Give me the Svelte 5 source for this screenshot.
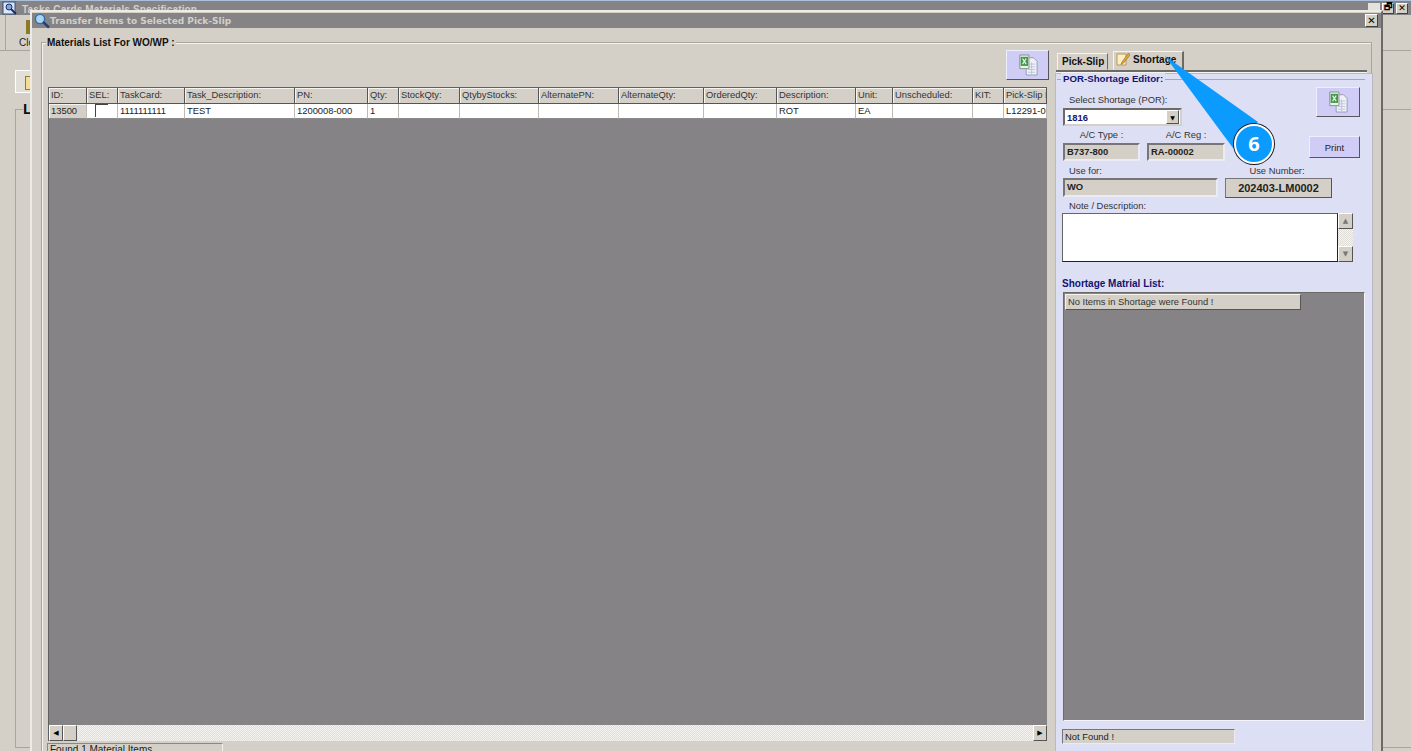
<script>
    const columns = [
        { name: "ID:", width: 38, value: "13500", grey: true },
        { name: "SEL:", width: 31, check: true },
        { name: "TaskCard:", width: 67, value: "1111111111" },
        { name: "Task_Description:", width: 110, value: "TEST" },
        { name: "PN:", width: 73, value: "1200008-000" },
        { name: "Qty:", width: 31, value: "1" },
        { name: "StockQty:", width: 61 },
        { name: "QtybyStocks:", width: 79 },
        { name: "AlternatePN:", width: 80 },
        { name: "AlternateQty:", width: 85 },
        { name: "OrderedQty:", width: 73 },
        { name: "Description:", width: 79, value: "ROT" },
        { name: "Unit:", width: 37, value: "EA" },
        { name: "Unscheduled:", width: 80 },
        { name: "KIT:", width: 31 },
        { name: "Pick-Slip No:", width: 43, value: "L12291-0" }
    ];
    const gridColumns = columns.map((c) => `${c.width}px`).join(" ");
</script>

{#snippet excel()}
    <svg class="excel" viewBox="0 0 22 24" width="20" height="22">
        <path d="M9 4h8l4 4v15H9z" fill="#eef1f8" stroke="#8f98b0" />
        <path d="M11 11h8M11 14h8M11 17h8M11 20h8M15 9v13" stroke="#b9c3dc" />
        <path d="M2 1h10v15H2z" fill="#eef3ea" stroke="#7f8a86" />
        <rect x="3" y="3" width="8" height="10" fill="#3f9a4c" />
        <path d="M5 5l4 6M9 5l-4 6" stroke="#e8f4e8" stroke-width="1.3" />
    </svg>
{/snippet}

<div class="desktop">
    <div class="back-window">
        <div class="back-title">
            <svg class="app-icon" viewBox="0 0 16 14" width="16" height="14">
                <rect x="1" y="1" width="12" height="12" fill="#dfe6f5" stroke="#33507f" />
                <circle cx="7" cy="6" r="3" fill="#7fa6e0" stroke="#1c3564" />
                <path d="M9 8l5 5" stroke="#1c2f5c" stroke-width="2" />
            </svg>
            <span>Tasks Cards Materials Specification</span>
            <div class="back-controls">
                <span class="ctl blank"></span>
                <span class="ctl">🗗</span>
                <span class="ctl">✕</span>
            </div>
        </div>
        <div class="back-toolbar">
            <div class="tool">
                <span class="door"></span>
                <span>Close</span>
            </div>
        </div>
        <div class="back-body">
            <div class="back-tab"><span class="note-mini"></span></div>
            <div class="back-group"><span class="back-legend">List</span></div>
        </div>
    </div>

    <div class="window">
        <div class="title">
            <svg viewBox="0 0 18 16" width="18" height="16">
                <circle cx="7" cy="6" r="4.6" fill="#a9d4f5" stroke="#2f6ea8" stroke-width="1.4" />
                <path d="M10 9l6 5.5" stroke="#27426f" stroke-width="2.4" />
            </svg>
            <span class="title-text">Transfer Items to Selected Pick-Slip</span>
            <span class="ctl close">✕</span>
        </div>

        <div class="group">
            <div class="group-legend">Materials List For WO/WP :</div>
            <div class="columns">
                <div class="left">
                    <div class="left-tools">
                        <button class="btn export">{@render excel()}</button>
                    </div>
                    <div class="table">
                        <div class="head" style="grid-template-columns: {gridColumns}">
                            {#each columns as c}
                                <div class="hcell">{c.name}</div>
                            {/each}
                        </div>
                        <div class="row" style="grid-template-columns: {gridColumns}">
                            {#each columns as c}
                                <div class="cell" class:grey={c.grey}>
                                    {#if c.check}<span class="check"></span>{:else}{c.value ?? ""}{/if}
                                </div>
                            {/each}
                        </div>
                        <div class="table-empty"></div>
                        <div class="hscroll">
                            <span class="sbtn">◀</span>
                            <span class="sbtn thumb"></span>
                            <span class="track"></span>
                            <span class="sbtn">▶</span>
                        </div>
                    </div>
                    <div class="found">Found 1 Material Items</div>
                </div>

                <div class="right">
                    <div class="tabs">
                        <div class="tab">Pick-Slip</div>
                        <div class="tab active">
                            <svg viewBox="0 0 14 14" width="14" height="14">
                                <path d="M1 2h9v11H1z" fill="#fbeec4" stroke="#b59a58" />
                                <path d="M12.5 1L6 10l-1 2.5L7.5 11 14 3z" fill="#e8a83c" stroke="#8a6420" stroke-width=".6" />
                            </svg>
                            Shortage
                        </div>
                    </div>
                    <div class="panel">
                        <div class="editor">
                            <div class="panel-legend">POR-Shortage Editor:</div>
                            <div class="top-fields">
                                <div class="fields-left">
                                    <div class="lbl select-lbl">Select Shortage (POR):</div>
                                    <div class="select">
                                        <span>1816</span>
                                        <span class="arrow">▼</span>
                                    </div>
                                    <div class="pair">
                                        <div class="pair-item">
                                            <div class="lbl center">A/C Type :</div>
                                            <div class="field w77">B737-800</div>
                                        </div>
                                        <div class="pair-item">
                                            <div class="lbl center">A/C Reg :</div>
                                            <div class="field w78">RA-00002</div>
                                        </div>
                                    </div>
                                </div>
                                <div class="fields-right">
                                    <button class="btn export small">{@render excel()}</button>
                                    <button class="btn print">Print</button>
                                </div>
                            </div>
                            <div class="use">
                                <div>
                                    <div class="lbl indent">Use for:</div>
                                    <div class="field w155">WO</div>
                                </div>
                                <div>
                                    <div class="lbl center use-lbl">Use Number:</div>
                                    <div class="use-number">202403-LM0002</div>
                                </div>
                            </div>
                            <div class="lbl indent">Note / Description:</div>
                            <div class="note">
                                <div class="note-box"></div>
                                <div class="vscroll">
                                    <span class="sbtn v">▲</span>
                                    <span class="track"></span>
                                    <span class="sbtn v">▼</span>
                                </div>
                            </div>
                            <div class="list-title">Shortage Matrial List:</div>
                            <div class="list">
                                <div class="list-head">No Items in Shortage were Found !</div>
                            </div>
                            <div class="not-found">Not Found !</div>
                        </div>
                    </div>
                </div>
            </div>
        </div>
    </div>

    <svg class="pointer" viewBox="0 0 1411 751" width="1411" height="751">
        <path d="M1165 56L1258 122L1233 148Z" fill="#0b9bff" />
    </svg>
    <div class="badge">6</div>
</div>

<style>
    :global(body) {
        margin: 0;
        overflow: hidden;
    }

    .desktop {
        position: relative;
        width: 1411px;
        height: 751px;
        overflow: hidden;
        background: #d4d0c8;
        font-family: "Liberation Sans", Arial, sans-serif;
        font-size: 9.4px;
        color: #222;
    }

    .back-window {
        display: flex;
        flex-direction: column;
        height: 100%;
        border-top: 1px solid #a9c0da;
    }

    .back-title {
        display: flex;
        align-items: center;
        gap: 4px;
        height: 14px;
        padding-left: 2px;
        background: #858385;
        color: #d4d0c8;
        font: bold 10px "Liberation Sans", sans-serif;
        letter-spacing: 0.15px;
    }

    .back-title > span {
        margin-top: 2px;
    }

    .back-controls {
        display: flex;
        gap: 2px;
        margin-left: auto;
        margin-right: 3px;
    }

    .ctl {
        display: flex;
        align-items: center;
        justify-content: center;
        width: 12px;
        height: 11px;
        box-sizing: border-box;
        background: #d4d0c8;
        border: 1px solid;
        border-color: #fff #404040 #404040 #fff;
        color: #000;
        font: bold 9px "DejaVu Sans", sans-serif;
        letter-spacing: 0;
    }

    .ctl.blank {
        background: #e4e2dc;
        border-color: #e4e2dc;
    }

    .back-toolbar {
        height: 36px;
        padding-left: 5px;
        border-bottom: 1px solid #a8a59d;
        box-sizing: border-box;
    }

    .tool {
        display: flex;
        flex-direction: column;
        align-items: flex-start;
        gap: 3px;
        height: 100%;
        padding: 5px 0 0 13px;
        border-left: 1px solid #a8a59d;
        font-size: 10px;
        box-sizing: border-box;
    }

    .door {
        width: 9px;
        height: 14px;
        margin-left: 7px;
        background: #8c7a28;
    }

    .back-body {
        flex: 1;
        padding: 19px 0 4px 15px;
        display: flex;
        flex-direction: column;
    }

    .back-tab {
        width: 30px;
        height: 23px;
        box-sizing: border-box;
        padding: 5px 0 0 9px;
        background: #e2dfd8;
        border: 1px solid #fff;
        border-right: 0;
    }

    .note-mini {
        display: block;
        width: 7px;
        height: 12px;
        background: #f5dc8f;
        border: 1px solid #8a7a45;
    }

    .back-group {
        flex: 1;
        margin-top: 16px;
        border: 1px solid #a8a59d;
        border-right: 0;
    }

    .back-legend {
        display: block;
        margin: -10px 0 0 7px;
        background: #d4d0c8;
        width: 12px;
        font: bold 15px "Liberation Sans", sans-serif;
        color: #111;
    }

    .window {
        position: absolute;
        left: 30px;
        top: 10px;
        width: 1353px;
        height: 760px;
        box-sizing: border-box;
        background: #d4d0c8;
        border-top: 2px solid #ecebe6;
        border-left: 2px solid #ecebe6;
        border-right: 2px solid #6c6a66;
        padding: 1px 2px 0 0;
    }

    .title {
        display: flex;
        align-items: center;
        height: 15px;
        padding-left: 1px;
        margin-right: -2px;
        background: #858385;
    }

    .title-text {
        margin-left: -1px;
        color: #d4d0c8;
        font: bold 9px "DejaVu Sans", sans-serif;
    }

    .ctl.close {
        width: 13px;
        height: 13px;
        margin-left: auto;
        margin-right: 3px;
        font-size: 10px;
    }

    .group {
        position: relative;
        margin: 14px 7px 0 9px;
        height: 720px;
        border: 1px solid #a8a59d;
        border-bottom: 0;
        box-shadow: inset 1px 1px 0 #f4f3ef;
    }

    .group-legend {
        position: absolute;
        left: 4px;
        top: -6px;
        padding: 0 1px;
        background: #d4d0c8;
        color: #111;
        font-weight: bold;
        font-size: 10px;
        line-height: 11px;
    }

    .columns {
        display: flex;
        gap: 8px;
        padding-left: 6px;
        padding-top: 7px;
    }

    .left {
        width: 999px;
    }

    .left-tools {
        display: flex;
        justify-content: flex-end;
        height: 37px;
        margin-right: -2px;
    }

    .btn {
        padding: 0;
        box-sizing: border-box;
        background: #cfcdf6;
        border: 1px solid;
        border-color: #eeeefe #55545f #55545f #eeeefe;
        font-family: inherit;
        color: #222;
    }

    .btn.export {
        width: 43px;
        height: 30px;
        display: flex;
        align-items: center;
        justify-content: center;
    }

    .table {
        height: 654px;
        display: flex;
        flex-direction: column;
        border-top: 1px solid #606060;
        border-left: 1px solid #606060;
        box-sizing: border-box;
        background: #858385;
        overflow: hidden;
    }

    .head,
    .row {
        display: grid;
        flex: none;
    }

    .hcell {
        height: 16px;
        padding: 1px 0 0 2px;
        box-sizing: border-box;
        overflow: hidden;
        white-space: nowrap;
        background: #d4d0c8;
        border-right: 1px solid #555;
        border-bottom: 1px solid #555;
        box-shadow: inset 1px 1px 0 #f4f3ef;
        color: #333;
        line-height: 11px;
    }

    .cell {
        height: 15px;
        padding: 1px 0 0 2px;
        box-sizing: border-box;
        overflow: hidden;
        white-space: nowrap;
        background: #fff;
        border-right: 1px solid #bdbbb6;
        border-bottom: 1px solid #8a8a8a;
        color: #222;
        line-height: 11px;
    }

    .cell.grey {
        background: #d4d0c8;
        box-shadow: inset 1px 1px 0 #f4f3ef;
    }

    .check {
        display: block;
        width: 13px;
        height: 13px;
        margin: -1px 0 0 6px;
        box-sizing: border-box;
        background: #fff;
        border-top: 1px solid #444;
        border-left: 1px solid #444;
    }

    .table-empty {
        flex: 1;
    }

    .hscroll {
        display: flex;
        flex: none;
        height: 16px;
    }

    .sbtn {
        display: flex;
        align-items: center;
        justify-content: center;
        flex: none;
        width: 14px;
        height: 16px;
        box-sizing: border-box;
        background: #d4d0c8;
        border: 1px solid;
        border-color: #fff #555 #555 #fff;
        color: #000;
        font: 7px "DejaVu Sans", sans-serif;
    }

    .sbtn.thumb {
        width: 14px;
    }

    .track {
        flex: 1;
        background: repeating-conic-gradient(#e0ddd8 0 25%, #f5f4f1 0 50%) 0 0 / 2px 2px;
    }

    .found {
        width: 176px;
        height: 16px;
        margin: 2px 0 0 -1px;
        padding: 0 0 0 2px;
        box-sizing: border-box;
        border-top: 1px solid #8a8780;
        border-left: 1px solid #8a8780;
        border-right: 1px solid #f4f3ef;
        font-size: 10px;
        line-height: 12px;
    }

    .right {
        width: 318px;
    }

    .tabs {
        display: flex;
        align-items: flex-end;
        gap: 5px;
        height: 20px;
        margin: 0 6px 0 1px;
        padding-left: 1px;
        border-bottom: 2px solid #6c6a66;
        box-shadow: 0 1px 0 #f4f3ef;
    }

    .tab {
        display: flex;
        align-items: center;
        gap: 3px;
        width: 51px;
        height: 17px;
        box-sizing: border-box;
        padding-left: 4px;
        border: 1px solid;
        border-color: #f4f3ef #6c6a66 transparent #f4f3ef;
        font-weight: bold;
        font-size: 10px;
        color: #111;
    }

    .tab.active {
        width: 71px;
        height: 19px;
        padding: 0 0 3px 2px;
        border-right-width: 2px;
    }

    .panel {
        margin-top: 1px;
        height: 700px;
        background: #dddff5;
        border: 1px solid #b9b8c6;
        border-bottom: 0;
        box-sizing: border-box;
        padding: 5px 7px 0 1px;
    }

    .editor {
        position: relative;
        border-top: 1px solid #a7a6b4;
        padding: 12px 0 0 6px;
    }

    .panel-legend {
        position: absolute;
        left: 4px;
        top: -7px;
        padding: 0 2px;
        background: #dddff5;
        color: #14146e;
        font-weight: bold;
        font-size: 9.7px;
        line-height: 11px;
    }

    .top-fields {
        display: flex;
        justify-content: space-between;
        height: 72px;
    }

    .lbl {
        color: #333;
        line-height: 11px;
    }

    .lbl.center {
        text-align: center;
    }

    .lbl.indent {
        padding-left: 6px;
    }

    .use-lbl {
        padding-right: 3px;
    }

    .select-lbl {
        margin: 2px 0 3px 6px;
    }

    .select {
        display: flex;
        align-items: center;
        justify-content: space-between;
        width: 119px;
        height: 18px;
        box-sizing: border-box;
        background: #fff;
        border: 2px solid;
        border-color: #6c6a66 #d4d0c8 #d4d0c8 #6c6a66;
        padding: 0 1px 0 2px;
        color: #14146e;
        font-weight: bold;
    }

    .arrow {
        display: flex;
        align-items: center;
        justify-content: center;
        width: 13px;
        height: 14px;
        background: #d4d0c8;
        border: 1px solid;
        border-color: #fff #555 #555 #fff;
        box-sizing: border-box;
        color: #000;
        font: 6px "DejaVu Sans", sans-serif;
    }

    .pair {
        display: flex;
        gap: 7px;
        margin-top: 3px;
    }

    .pair-item .lbl {
        margin-bottom: 3px;
    }

    .field {
        height: 18px;
        box-sizing: border-box;
        padding-left: 2px;
        background: #d4d0c8;
        border: 2px solid;
        border-color: #77757a #ecebf5 #ecebf5 #77757a;
        color: #222;
        font-weight: bold;
        line-height: 14px;
    }

    .w77 { width: 77px; }
    .w78 { width: 78px; }
    .w155 { width: 155px; }

    .fields-right {
        display: flex;
        flex-direction: column;
        align-items: flex-end;
        gap: 19px;
        margin-top: -5px;
        padding: 0 5px 0 0;
    }

    .btn.export.small {
        width: 44px;
    }

    .btn.print {
        width: 51px;
        height: 22px;
        font-size: 9.4px;
    }

    .use {
        display: flex;
        gap: 7px;
        margin-top: 1px;
    }

    .use .field {
        height: 19px;
        margin-top: 2px;
    }

    .use-number {
        width: 107px;
        height: 20px;
        margin-top: 2px;
        box-sizing: border-box;
        background: #d4d0c8;
        border: 1px solid;
        border-color: #77757a #555 #555 #77757a;
        text-align: center;
        font-weight: bold;
        font-size: 11px;
        line-height: 18px;
        color: #222;
    }

    .use + .lbl {
        margin-top: 2px;
    }

    .note {
        display: flex;
        width: 291px;
        height: 49px;
        margin-top: 2px;
        margin-left: -1px;
    }

    .note-box {
        flex: 1;
        background: #fff;
        border: 1px solid #222;
        border-top-color: #666;
        border-left-color: #666;
    }

    .vscroll {
        display: flex;
        flex-direction: column;
        width: 15px;
    }

    .sbtn.v {
        width: 15px;
        color: #777;
    }

    .list-title {
        margin: 16px 0 0 -1px;
        color: #14146e;
        font-weight: bold;
        font-size: 10px;
        line-height: 11px;
    }

    .list {
        width: 302px;
        height: 429px;
        margin-top: 3px;
        padding: 1px 0 0 1px;
        box-sizing: border-box;
        background: #858385;
        border: 1px solid;
        border-color: #6c6a66 #f4f3fb #f4f3fb #6c6a66;
    }

    .list-head {
        width: 236px;
        height: 16px;
        box-sizing: border-box;
        padding-left: 2px;
        background: #d4d0c8;
        border: 1px solid;
        border-color: #f4f3ef #555 #555 #f4f3ef;
        line-height: 13px;
        color: #333;
    }

    .not-found {
        width: 173px;
        height: 15px;
        margin: 8px 0 0 -1px;
        box-sizing: border-box;
        padding-left: 2px;
        background: #d4d0c8;
        border: 1px solid;
        border-color: #77757a #ecebf5 #ecebf5 #77757a;
        line-height: 13px;
        color: #222;
    }

    .pointer {
        position: absolute;
        left: 0;
        top: 0;
        pointer-events: none;
    }

    .badge {
        position: absolute;
        left: 1234px;
        top: 124px;
        width: 40px;
        height: 40px;
        box-sizing: border-box;
        border-radius: 50%;
        background: #0b9bff;
        border: 2px solid #fff;
        box-shadow: 0 0 0 1px #14181e;
        color: #fff;
        text-align: center;
        font: bold 20px/36px "Open Sans", sans-serif;
    }
</style>
